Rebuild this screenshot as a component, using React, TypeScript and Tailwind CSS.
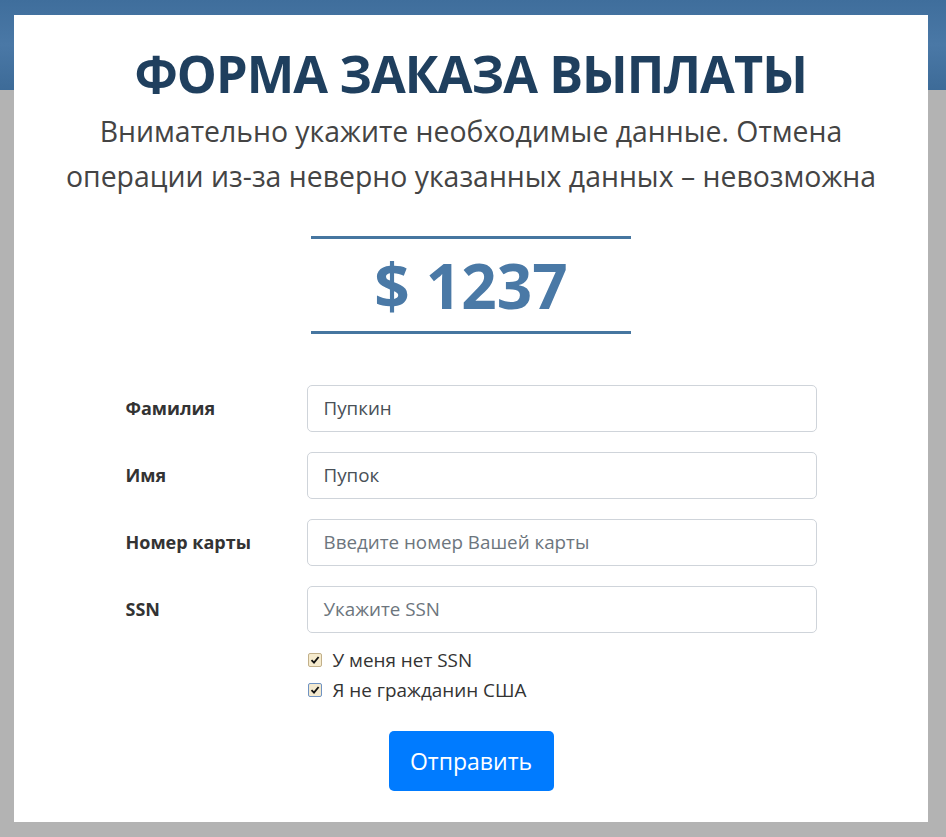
import React from "react";

function Check({ blue }: { blue?: boolean }) {
  return (
    <span
      className={`inline-flex h-[14px] w-[14px] shrink-0 items-center justify-center rounded-[2px] border ${
        blue ? "border-[#6f93c4] bg-[#f3e9cf]" : "border-[#c2b08a] bg-[#f6ebcd]"
      }`}
    >
      <svg width="10" height="10" viewBox="0 0 10 10">
        <path d="M1.5 5.2 L4 7.6 L8.6 2" stroke="#111" strokeWidth="1.8" fill="none" />
      </svg>
    </span>
  );
}

export default function App() {
  const rows = [
    { label: "Фамилия", value: "Пупкин", ph: false },
    { label: "Имя", value: "Пупок", ph: false },
    { label: "Номер карты", value: "Введите номер Вашей карты", ph: true },
    { label: "SSN", value: "Укажите SSN", ph: true },
  ];
  return (
    <div
      className="h-[837px] w-[946px] overflow-hidden pt-[15px] pl-[14px] bg-[linear-gradient(to_bottom,#3f6e9c_0px,#4a78a6_45px,#3d6b98_90px,#b3b3b3_90px,#b3b3b3_100%)]"
      style={{ fontFamily: '"Open Sans", sans-serif' }}
    >
      <div className="flex h-[807px] w-[914px] flex-col items-center bg-white">
        <h1 className="mt-[28px] text-[52px] font-bold leading-[60px] text-[#1f3f5e] tracking-[-1px] scale-x-[0.97]">
          ФОРМА ЗАКАЗА ВЫПЛАТЫ
        </h1>
        <p className="mt-[6px] whitespace-nowrap text-center text-[28.4px] leading-[45px] text-[#444]">
          Внимательно укажите необходимые данные. Отмена
          <br />
          операции из-за неверно указанных данных – невозможна
        </p>
        <div className="mt-[37px] flex h-[98px] w-[320px] items-center justify-center border-y-[3px] border-[#4676a0]">
          <span className="text-[62px] font-bold leading-none text-[#4a79a6]">$ 1237</span>
        </div>
        <div className="mt-[51px] flex w-[691px] flex-col">
          <div className="flex flex-col gap-[20px]">
            {rows.map((r) => (
              <div key={r.label} className="flex items-center">
                <div className="w-[181px] text-[18px] font-bold text-[#333]">{r.label}</div>
                <div
                  className={`flex h-[47px] w-[510px] items-center rounded-[5px] border border-[#cfd4da] px-[16px] text-[18.8px] ${
                    r.ph ? "text-[#6c757d]" : "text-[#495057]"
                  }`}
                >
                  {r.value}
                </div>
              </div>
            ))}
          </div>
          <div className="mt-[16px] flex flex-col gap-[8px] pl-[182px]">
            <label className="flex items-center gap-[11px] text-[18.9px] leading-[22px] text-[#333]">
              <Check />
              У меня нет SSN
            </label>
            <label className="flex items-center gap-[11px] text-[18.9px] leading-[22px] text-[#333]">
              <Check blue />
              Я не гражданин США
            </label>
          </div>
        </div>
        <button className="mt-[30px] h-[60px] w-[165px] rounded-[5px] bg-[#007bff] text-[23px] text-white">
          Отправить
        </button>
      </div>
    </div>
  );
}
